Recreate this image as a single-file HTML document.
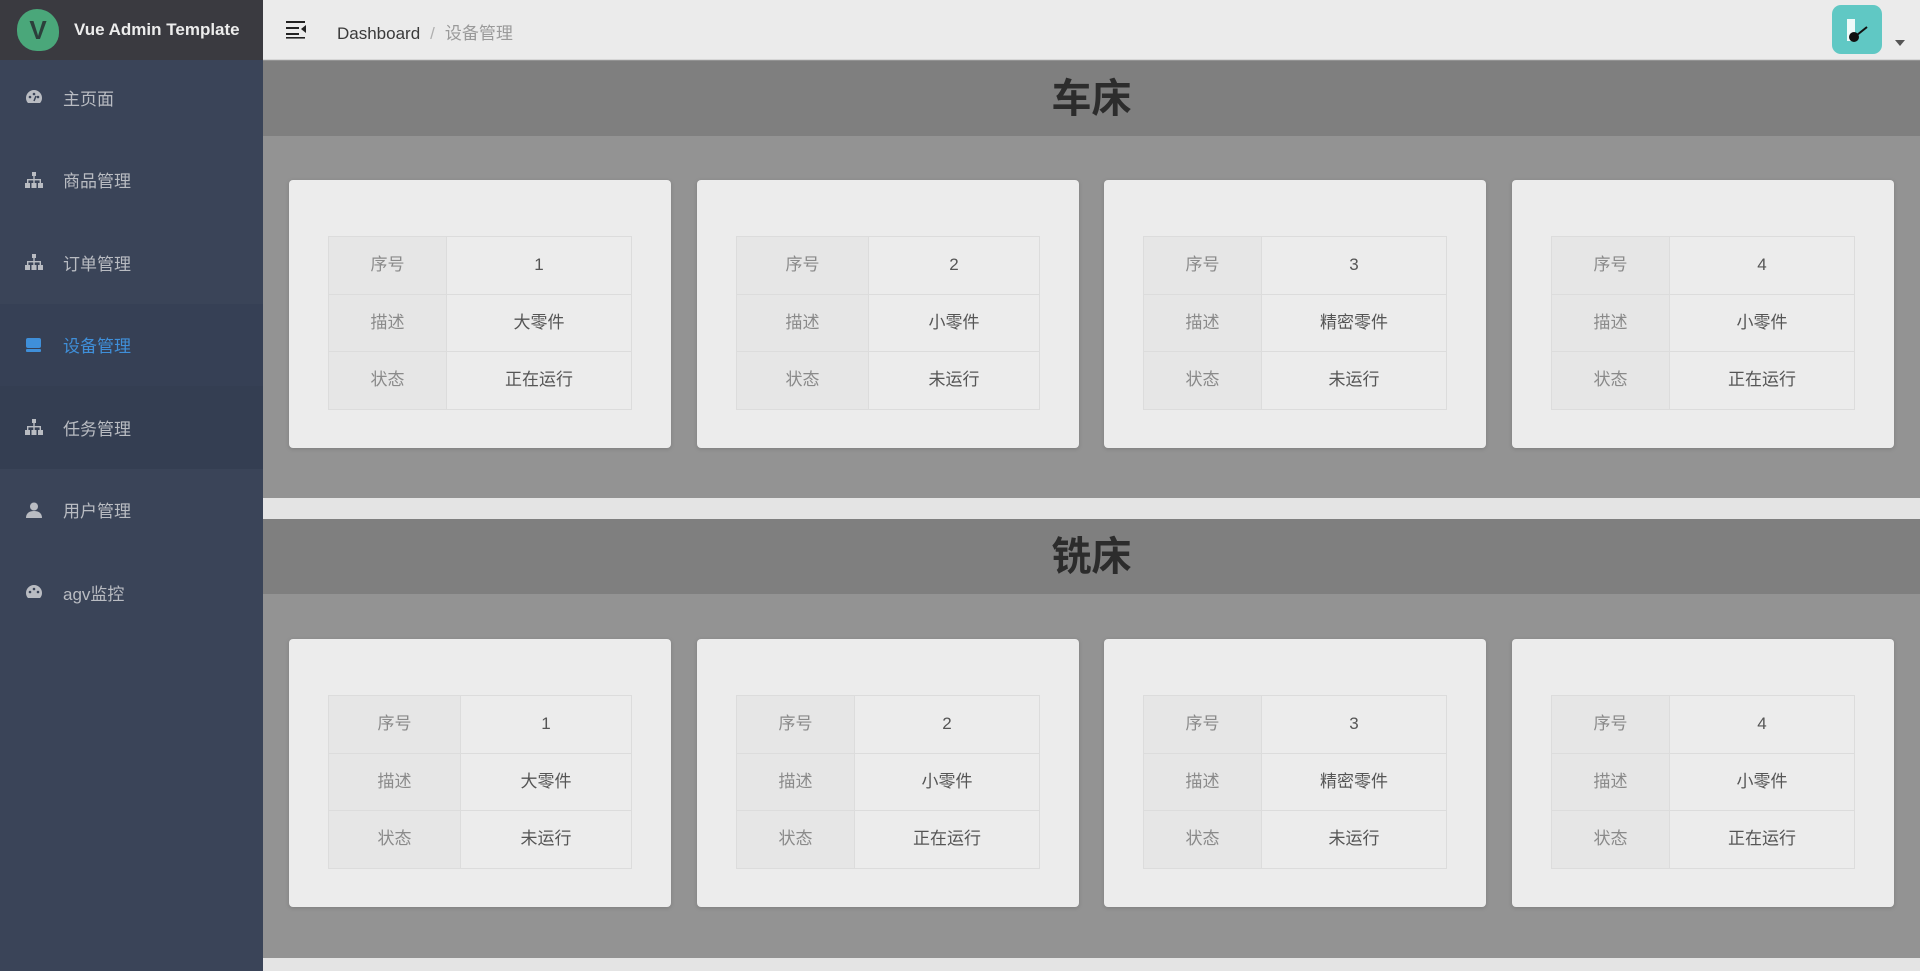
<!DOCTYPE html>
<html><head><meta charset="utf-8"><style>
*{margin:0;padding:0;box-sizing:border-box}
body{width:1920px;height:971px;overflow:hidden;font-family:"Liberation Sans","Noto Sans CJK SC",sans-serif;background:#939393;position:relative}
.side{position:absolute;left:0;top:0;width:263px;height:971px;background:#3a4458}
.logo{height:60px;background:#3a3a40;display:flex;align-items:center;padding-left:17px}
.logo .v{width:42px;height:42px;border-radius:50% 55% 45% 50%;background:#4aa77a;color:#2c3f3b;font-weight:bold;font-size:26px;display:flex;align-items:center;justify-content:center}
.logo span{color:#ececec;font-weight:bold;font-size:17px;margin-left:15px}
.mi{height:82.5px;display:flex;align-items:center;padding-left:25px;color:#b9bcc2;font-size:17px}
.mi i{width:18px;height:16px;margin-right:20px;display:inline-block;line-height:0}
.mi.act{color:#3f8fd9;background:#364055}
.mi.hov{background:#343e52}
.hdr{position:absolute;left:263px;top:0;right:0;height:60px;background:#ebebeb;border-bottom:1px solid #d6d6d6}
.bc{position:absolute;left:74px;top:19px;font-size:17px;color:#3a3a3a}
.bc .s{color:#b0b0b0;margin:0 10px}.bc .c{color:#9a9a9a}
.ham{position:absolute;left:22px;top:19px}
.av{position:absolute;left:1569px;top:5px;width:50px;height:49px;border-radius:9px;background:#60c8c4}
.car{position:absolute;left:1632px;top:40px;border:5px solid transparent;border-top:6px solid #555}
.band{position:absolute;left:263px;right:0;height:75px;background:#7f7f7f;color:#2c2c2c;font-weight:bold;font-size:40px;text-align:center;line-height:76px}
.sep{position:absolute;left:263px;right:0;background:#e4e4e4}
.card{position:absolute;width:382px;height:268px;background:#ececec;border-radius:4px;box-shadow:0 1px 4px rgba(0,0,0,.15)}
table{position:absolute;left:39px;top:56px;width:304px;border-collapse:collapse;font-size:17px}
td{height:57.6px;border:1px solid #dcdcdc;text-align:center;vertical-align:middle;line-height:20px;color:#555;padding:0}
td.l{background:#e6e6e6;color:#8a8a8a}
</style></head><body>
<div class="side">
<div class="logo"><div class="v">V</div><span>Vue Admin Template</span></div>
<div class="mi" style="margin-top:-4px"><i><svg width="18" height="16" viewBox="0 0 18 16"><path d="M9 1A8 8 0 0 0 1 9c0 2 .7 3.7 2 5h12c1.3-1.3 2-3 2-5a8 8 0 0 0-8-8z" fill="#b9bcc2"/><circle cx="5" cy="8" r="1.3" fill="#3a4458"/><circle cx="9" cy="5" r="1.3" fill="#3a4458"/><circle cx="13" cy="8" r="1.3" fill="#3a4458"/><path d="M9 12l2-5" stroke="#3a4458" stroke-width="1.5"/></svg></i>主页面</div>
<div class="mi"><i><svg width="18" height="16" viewBox="0 0 18 16" fill="#b9bcc2"><rect x="7" y="0" width="4" height="4"/><rect x="8.3" y="4" width="1.4" height="4"/><rect x="2" y="7" width="14" height="1.4"/><rect x="2" y="7" width="1.4" height="4"/><rect x="14.6" y="7" width="1.4" height="4"/><rect x="8.3" y="7" width="1.4" height="4"/><rect x="0" y="11" width="5" height="5"/><rect x="6.5" y="11" width="5" height="5"/><rect x="13" y="11" width="5" height="5"/></svg></i>商品管理</div>
<div class="mi"><i><svg width="18" height="16" viewBox="0 0 18 16" fill="#b9bcc2"><rect x="7" y="0" width="4" height="4"/><rect x="8.3" y="4" width="1.4" height="4"/><rect x="2" y="7" width="14" height="1.4"/><rect x="2" y="7" width="1.4" height="4"/><rect x="14.6" y="7" width="1.4" height="4"/><rect x="8.3" y="7" width="1.4" height="4"/><rect x="0" y="11" width="5" height="5"/><rect x="6.5" y="11" width="5" height="5"/><rect x="13" y="11" width="5" height="5"/></svg></i>订单管理</div>
<div class="mi act"><i><svg width="18" height="16" viewBox="0 0 18 16" fill="#3f8fd9"><rect x="1" y="1" width="15" height="10" rx="2"/><rect x="1" y="12" width="15" height="3" rx="1"/></svg></i>设备管理</div>
<div class="mi hov"><i><svg width="18" height="16" viewBox="0 0 18 16" fill="#b9bcc2"><rect x="7" y="0" width="4" height="4"/><rect x="8.3" y="4" width="1.4" height="4"/><rect x="2" y="7" width="14" height="1.4"/><rect x="2" y="7" width="1.4" height="4"/><rect x="14.6" y="7" width="1.4" height="4"/><rect x="8.3" y="7" width="1.4" height="4"/><rect x="0" y="11" width="5" height="5"/><rect x="6.5" y="11" width="5" height="5"/><rect x="13" y="11" width="5" height="5"/></svg></i>任务管理</div>
<div class="mi"><i><svg width="18" height="16" viewBox="0 0 18 16" fill="#b9bcc2"><circle cx="9" cy="4.5" r="4"/><path d="M1 16c0-5 3.5-7 8-7s8 2 8 7z"/></svg></i>用户管理</div>
<div class="mi"><i><svg width="18" height="16" viewBox="0 0 18 16"><path d="M9 1A8 8 0 0 0 1 9c0 2 .7 3.7 2 5h12c1.3-1.3 2-3 2-5a8 8 0 0 0-8-8z" fill="#b9bcc2"/><circle cx="5" cy="8" r="1.3" fill="#3a4458"/><circle cx="9" cy="5" r="1.3" fill="#3a4458"/><circle cx="13" cy="8" r="1.3" fill="#3a4458"/></svg></i>agv监控</div>
</div>
<div class="hdr">
<svg class="ham" width="22" height="20" viewBox="0 0 22 20" fill="#222"><rect x="1" y="2" width="19" height="2"/><rect x="1" y="8" width="13" height="2"/><rect x="1" y="14" width="13" height="2"/><rect x="1" y="18" width="19" height="1.6"/><path d="M21 6v8l-5-4z"/></svg>
<div class="bc">Dashboard<span class="s">/</span><span class="c">设备管理</span></div>
<div class="av"><svg width="50" height="49"><rect x="15" y="14" width="8" height="22" fill="#fff" opacity=".9"/><circle cx="22" cy="32" r="5" fill="#111"/><path d="M25 30l10-8" stroke="#111" stroke-width="2"/></svg></div>
<div class="car"></div>
</div>
<div class="band" style="top:61px">车床</div>
<div class="sep" style="top:498px;height:21px"></div>
<div class="band" style="top:519px">铣床</div>
<div class="sep" style="top:958px;height:13px"></div>

<div class="card" style="left:289px;top:180px"><table><tr><td class="l" style="width:118px">序号</td><td>1</td></tr><tr><td class="l">描述</td><td>大零件</td></tr><tr><td class="l">状态</td><td>正在运行</td></tr></table></div>
<div class="card" style="left:697px;top:180px"><table><tr><td class="l" style="width:132px">序号</td><td>2</td></tr><tr><td class="l">描述</td><td>小零件</td></tr><tr><td class="l">状态</td><td>未运行</td></tr></table></div>
<div class="card" style="left:1104px;top:180px"><table><tr><td class="l" style="width:118px">序号</td><td>3</td></tr><tr><td class="l">描述</td><td>精密零件</td></tr><tr><td class="l">状态</td><td>未运行</td></tr></table></div>
<div class="card" style="left:1512px;top:180px"><table><tr><td class="l" style="width:118px">序号</td><td>4</td></tr><tr><td class="l">描述</td><td>小零件</td></tr><tr><td class="l">状态</td><td>正在运行</td></tr></table></div>

<div class="card" style="left:289px;top:639px"><table><tr><td class="l" style="width:132px">序号</td><td>1</td></tr><tr><td class="l">描述</td><td>大零件</td></tr><tr><td class="l">状态</td><td>未运行</td></tr></table></div>
<div class="card" style="left:697px;top:639px"><table><tr><td class="l" style="width:118px">序号</td><td>2</td></tr><tr><td class="l">描述</td><td>小零件</td></tr><tr><td class="l">状态</td><td>正在运行</td></tr></table></div>
<div class="card" style="left:1104px;top:639px"><table><tr><td class="l" style="width:118px">序号</td><td>3</td></tr><tr><td class="l">描述</td><td>精密零件</td></tr><tr><td class="l">状态</td><td>未运行</td></tr></table></div>
<div class="card" style="left:1512px;top:639px"><table><tr><td class="l" style="width:118px">序号</td><td>4</td></tr><tr><td class="l">描述</td><td>小零件</td></tr><tr><td class="l">状态</td><td>正在运行</td></tr></table></div>
</body></html>
